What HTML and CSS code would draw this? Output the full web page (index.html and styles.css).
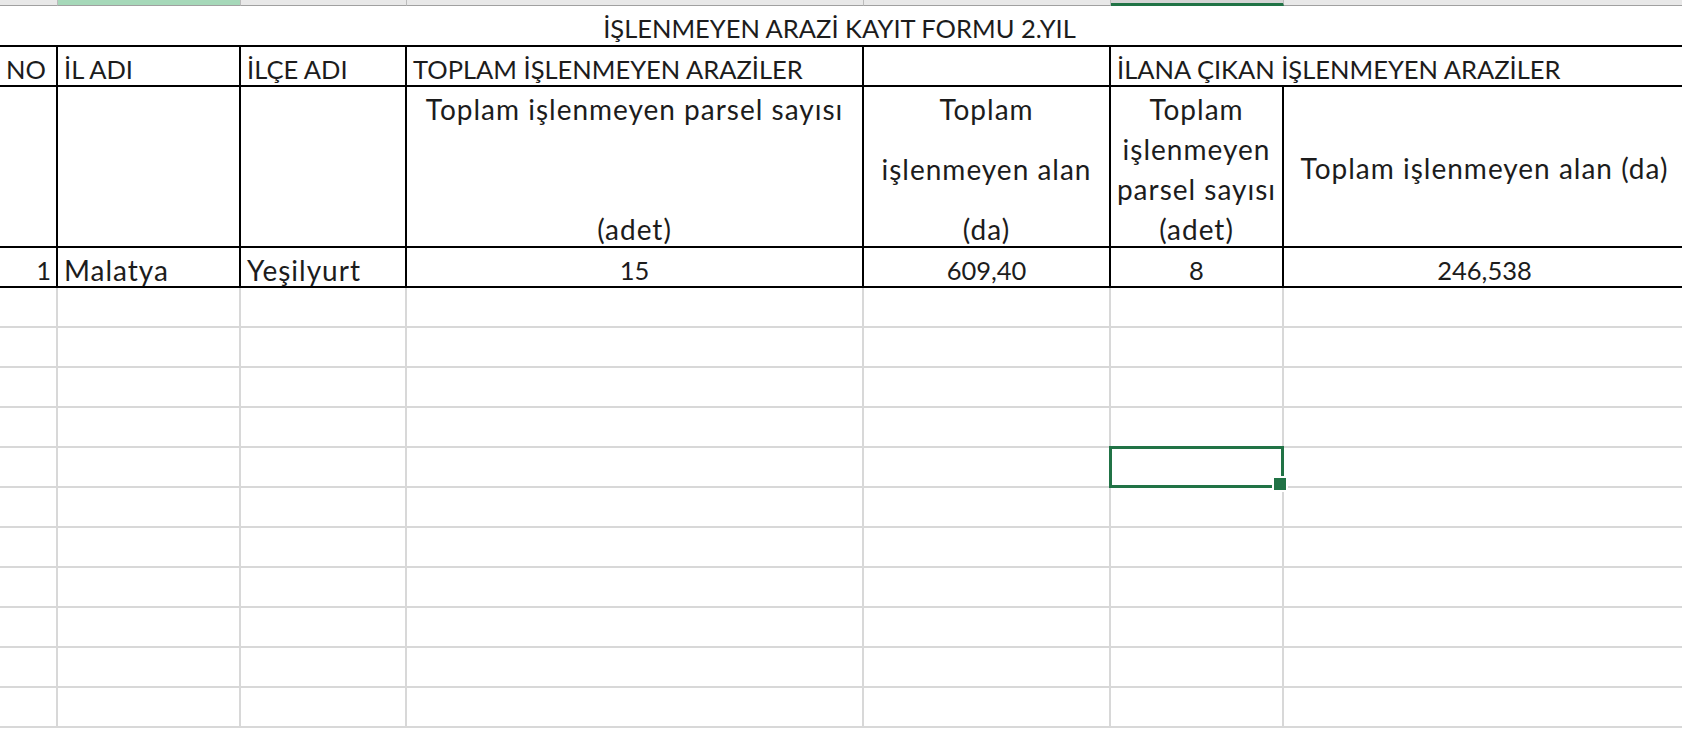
FILE: index.html
```html
<!DOCTYPE html>
<html lang="tr">
<head>
<meta charset="utf-8">
<title>İşlenmeyen Arazi Kayıt Formu</title>
<link rel="stylesheet" href="styles.css">
</head>
<body>
<div class="sheet">
  <div class="ch"></div><div class="ch ch-sel"></div><div class="ch"></div><div class="ch"></div><div class="ch"></div><div class="ch ch-act"></div><div class="ch"></div>

  <div class="title caps">İŞLENMEYEN ARAZİ KAYIT FORMU 2.YIL</div>

  <div class="c left caps">NO</div>
  <div class="c left caps">İL ADI</div>
  <div class="c left caps">İLÇE ADI</div>
  <div class="c left caps">TOPLAM İŞLENMEYEN ARAZİLER</div>
  <div class="c"></div>
  <div class="c left caps span2">İLANA ÇIKAN İŞLENMEYEN ARAZİLER</div>

  <div class="c"></div>
  <div class="c"></div>
  <div class="c"></div>
  <div class="c stack lower"><span>Toplam işlenmeyen parsel sayısı</span><span>(adet)</span></div>
  <div class="c stack lower"><span>Toplam</span><span>işlenmeyen alan</span><span>(da)</span></div>
  <div class="c stack lower"><span>Toplam</span><span>işlenmeyen</span><span>parsel sayısı</span><span>(adet)</span></div>
  <div class="c mid lower">Toplam işlenmeyen alan (da)</div>

  <div class="c num caps">1</div>
  <div class="c left lower">Malatya</div>
  <div class="c left lower">Yeşilyurt</div>
  <div class="c ctr caps">15</div>
  <div class="c ctr caps">609,40</div>
  <div class="c ctr caps">8</div>
  <div class="c ctr caps">246,538</div>

  <div class="g"></div><div class="g"></div><div class="g"></div><div class="g"></div><div class="g"></div><div class="g"></div><div class="g"></div>
  <div class="g"></div><div class="g"></div><div class="g"></div><div class="g"></div><div class="g"></div><div class="g"></div><div class="g"></div>
  <div class="g"></div><div class="g"></div><div class="g"></div><div class="g"></div><div class="g"></div><div class="g"></div><div class="g"></div>
  <div class="g"></div><div class="g"></div><div class="g"></div><div class="g"></div><div class="g"></div><div class="g"></div><div class="g"></div>
  <div class="g"></div><div class="g"></div><div class="g"></div><div class="g"></div><div class="g"></div><div class="g sel"></div><div class="g"></div>
  <div class="g"></div><div class="g"></div><div class="g"></div><div class="g"></div><div class="g"></div><div class="g"></div><div class="g"></div>
  <div class="g"></div><div class="g"></div><div class="g"></div><div class="g"></div><div class="g"></div><div class="g"></div><div class="g"></div>
  <div class="g"></div><div class="g"></div><div class="g"></div><div class="g"></div><div class="g"></div><div class="g"></div><div class="g"></div>
  <div class="g"></div><div class="g"></div><div class="g"></div><div class="g"></div><div class="g"></div><div class="g"></div><div class="g"></div>
  <div class="g"></div><div class="g"></div><div class="g"></div><div class="g"></div><div class="g"></div><div class="g"></div><div class="g"></div>
  <div class="g"></div><div class="g"></div><div class="g"></div><div class="g"></div><div class="g"></div><div class="g"></div><div class="g"></div>
</div>
</body>
</html>
```

FILE: styles.css
```css
* { box-sizing: border-box; }
html, body { margin: 0; padding: 0; background: #fff; overflow: hidden; }
body {
  font-family: Lato, "Open Sans", sans-serif;
  font-size: 26px;
  color: #1c1c1c;
}
.caps { font-size: 25.5px; }
.lower { font-size: 28px; letter-spacing: 1px; }
.sheet {
  display: grid;
  grid-template-columns: 58px 183px 166px 457px 247px 173px 403px;
  grid-template-rows: 6px 41px 40px 161px 40px repeat(11, 40px);
  width: 1687px;
}
.ch {
  background: #e8e8e8;
  border-right: 1px solid #bcbcbc;
  border-bottom: 1px solid #a0a0a0;
}
.ch-sel { background: #a6d8b9; }
.ch-act { background: #d4d4d4; border-bottom: 3px solid #217346; }
.title {
  grid-column: 1 / -1;
  border-bottom: 2px solid #000;
  display: flex;
  align-items: flex-end;
  justify-content: center;
  line-height: 32px;
  padding: 0 8px 1px 0;
  white-space: nowrap;
}
.c {
  border-right: 2px solid #000;
  border-bottom: 2px solid #000;
  line-height: 32px;
  white-space: nowrap;
  display: flex;
}
.left { align-items: flex-end; padding-left: 6px; }
.num { align-items: flex-end; justify-content: flex-end; padding-right: 5px; }
.ctr { align-items: flex-end; justify-content: center; }
.span2 { grid-column: span 2; }
.stack {
  flex-direction: column;
  justify-content: space-between;
  align-items: center;
  padding: 6px 2px 1px;
}
.mid { align-items: center; justify-content: center; padding-top: 2px; }
.g {
  border-right: 2px solid #d8d8d8;
  border-bottom: 2px solid #d8d8d8;
}
.sel { position: relative; }
.sel::before {
  content: "";
  position: absolute;
  left: -2px; top: -2px; right: -2px; bottom: -2px;
  border: 3px solid #217346;
  z-index: 2;
}
.sel::after {
  content: "";
  position: absolute;
  right: -6px; bottom: -6px;
  width: 12px; height: 12px;
  background: #217346;
  border: 2px solid #fff;
  z-index: 3;
}
```
